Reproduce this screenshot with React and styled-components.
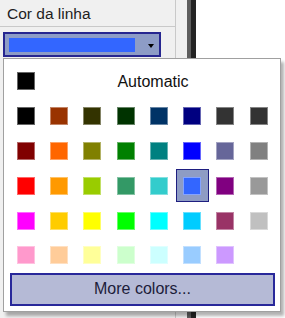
import styled, { createGlobalStyle } from 'styled-components'

const GlobalStyle = createGlobalStyle`
	html, body {
		margin: 0;
		padding: 0;
		background: #ffffff;
	}
	body {
		font-family: 'Liberation Sans', Arial, sans-serif;
	}
`

const rows = [
	['#000000', '#993300', '#333300', '#003300', '#003366', '#000080', '#333333', '#333333'],
	['#800000', '#ff6600', '#808000', '#008000', '#008080', '#0000ff', '#666699', '#808080'],
	['#ff0000', '#ff9900', '#99cc00', '#339966', '#33cccc', '#3366ff', '#800080', '#999999'],
	['#ff00ff', '#ffcc00', '#ffff00', '#00ff00', '#00ffff', '#00ccff', '#993366', '#c0c0c0'],
	['#ff99cc', '#ffcc99', '#ffff99', '#ccffcc', '#ccffff', '#99ccff', '#cc99ff', null],
]

const selected = '#3366ff'

const App = () => {
	return (
		<>
			<GlobalStyle />
			<Page>
				<LeftPanel>
					<LabelRow>Cor da linha</LabelRow>
					<DropRow>
						<Dropdown>
							<ColorBar $color={selected} />
							<Arrow />
						</Dropdown>
					</DropRow>
				</LeftPanel>
				<Gutter />
				<DarkEdge />
				<Canvas />

				<Popup>
					<AutoRow>
						<Swatch $color='#000000' />
						<AutoLabel>Automatic</AutoLabel>
					</AutoRow>
					<Grid>
						{rows.flat().map((c, i) => (
							<Cell key={i} $active={c === selected}>
								{c && <Swatch $color={c} />}
							</Cell>
						))}
					</Grid>
					<MoreButton>More colors...</MoreButton>
				</Popup>
			</Page>
		</>
	)
}

export default App

const Page = styled.div`
	position: relative;
	display: flex;
	width: 285px;
	height: 318px;
	overflow: hidden;
	background: #ffffff;
`

const LeftPanel = styled.div`
	width: 175px;
	flex-shrink: 0;
	background: #f0f0f0;
	border-right: 1px solid #c9c9c9;
	display: flex;
	flex-direction: column;
`

const LabelRow = styled.div`
	height: 27px;
	box-sizing: border-box;
	border-bottom: 1px solid #c9c9c9;
	padding-left: 7px;
	font-size: 15.5px;
	line-height: 27px;
	color: #1e1e1e;
`

const DropRow = styled.div`
	padding: 5px 0 0 3px;
`

const Dropdown = styled.div`
	width: 158px;
	height: 25px;
	box-sizing: border-box;
	border: 2px solid #262690;
	background: #8d9cc6;
	display: flex;
	align-items: center;
	padding-left: 4px;
`

const ColorBar = styled.div`
	width: 126px;
	height: 14px;
	background: ${(p) => p.$color};
`

const Arrow = styled.div`
	margin-left: 13px;
	margin-top: 2px;
	width: 0;
	height: 0;
	border-left: 3.5px solid transparent;
	border-right: 3.5px solid transparent;
	border-top: 4px solid #000000;
`

const Gutter = styled.div`
	width: 11px;
	flex-shrink: 0;
	background: #f0f0f0;
`

const DarkEdge = styled.div`
	width: 9px;
	flex-shrink: 0;
	background: linear-gradient(to right, #5e5e5e 0 4px, #232323 4px 100%);
`

const Canvas = styled.div`
	flex: 1;
	background: #ffffff;
`

const Popup = styled.div`
	position: absolute;
	left: 3px;
	top: 58px;
	width: 278px;
	height: 254px;
	box-sizing: border-box;
	border: 1px solid #a0a0a0;
	background: #ffffff;
	box-shadow: 3px 4px 3px rgba(0, 0, 0, 0.3);
	padding: 0 5px 5px 6px;
	display: flex;
	flex-direction: column;
`

const AutoRow = styled.div`
	height: 36px;
	margin-top: 4px;
	display: flex;
	align-items: center;
	padding-left: 7px;
`

const AutoLabel = styled.div`
	flex: 1;
	text-align: center;
	font-size: 16px;
	color: #111111;
	padding: 2px 4px 0 0;
`

const Grid = styled.div`
	display: grid;
	grid-template-columns: repeat(8, 33.3px);
	grid-auto-rows: 34.75px;
	margin-left: -1px;
`

const Cell = styled.div`
	display: flex;
	align-items: center;
	justify-content: center;
	${(p) =>
		p.$active &&
		`
		box-sizing: border-box;
		width: 33px;
		height: 33px;
		margin: auto;
		border: 1.5px solid #1e1e80;
		background: #8e9cc4;
	`}
`

const Swatch = styled.div`
	width: 18px;
	height: 18px;
	box-sizing: border-box;
	background: ${(p) => p.$color};
	border: 1px solid rgba(255, 255, 255, 0.4);
	flex-shrink: 0;
`

const MoreButton = styled.div`
	height: 33px;
	width: 265px;
	box-sizing: border-box;
	border: 2px solid #28289a;
	background: #b5bad6;
	display: flex;
	align-items: center;
	justify-content: center;
	font-size: 16px;
	color: #1c1c3a;
`
